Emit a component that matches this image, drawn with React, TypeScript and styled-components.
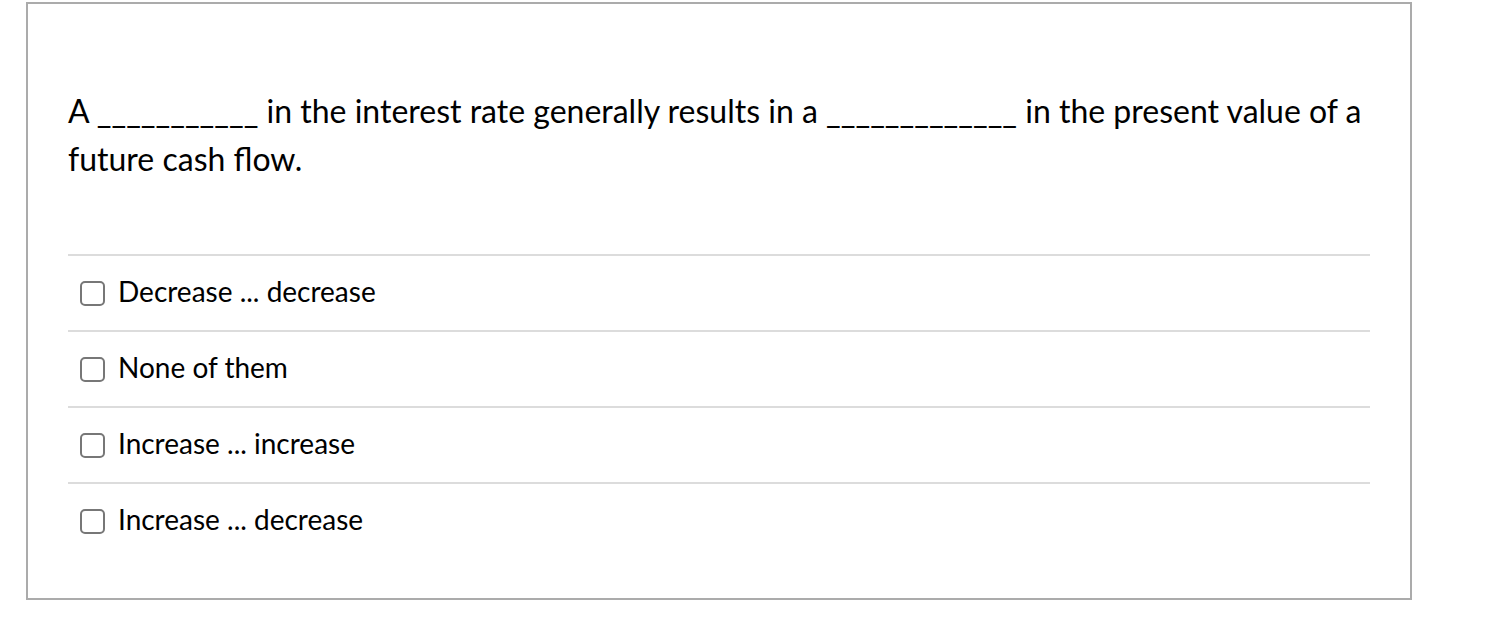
import { createGlobalStyle } from 'styled-components'
import styled from 'styled-components'

const GlobalStyle = createGlobalStyle`
    html, body {
        margin: 0;
        padding: 0;
        background: #fff;
    }
    body {
        font-family: Lato, "Open Sans", sans-serif;
        color: #000;
    }
`

const options = [
    'Decrease ... decrease',
    'None of them',
    'Increase ... increase',
    'Increase ... decrease',
]

export default function App() {
    return (
        <>
            <GlobalStyle />
            <Page>
                <QuestionCard>
                    <QuestionText>
                        A ___________ in the interest rate generally results in a _____________ in the present value of a
                        future cash flow.
                    </QuestionText>
                    <AnswerList>
                        {options.map(option => (
                            <AnswerRow key={option}>
                                <Checkbox type="checkbox" />
                                <AnswerLabel>{option}</AnswerLabel>
                            </AnswerRow>
                        ))}
                    </AnswerList>
                </QuestionCard>
            </Page>
        </>
    )
}

const Page = styled.div`
    padding: 2px 0 0 26px;
    width: 1492px;
    box-sizing: border-box;
`

const QuestionCard = styled.div`
    width: 1386px;
    height: 598px;
    box-sizing: border-box;
    border: 2px solid #ababab;
    padding: 83px 40px 0 40px;
`

const QuestionText = styled.p`
    margin: 0;
    font-size: 32px;
    line-height: 48px;
    max-width: 1302px;
`

const AnswerList = styled.div`
    margin-top: 71px;
    width: 1302px;
`

const AnswerRow = styled.label`
    display: flex;
    align-items: center;
    gap: 13px;
    height: 76px;
    padding-left: 12px;
    border-top: 2px solid #dcdcdc;
    box-sizing: border-box;
`

const Checkbox = styled.input`
    appearance: none;
    margin: 0;
    width: 25px;
    height: 25px;
    border: 2px solid #777;
    border-radius: 5px;
    background: #fff;
    box-sizing: border-box;
`

const AnswerLabel = styled.span`
    font-size: 28px;
    margin-bottom: 5px;
`
